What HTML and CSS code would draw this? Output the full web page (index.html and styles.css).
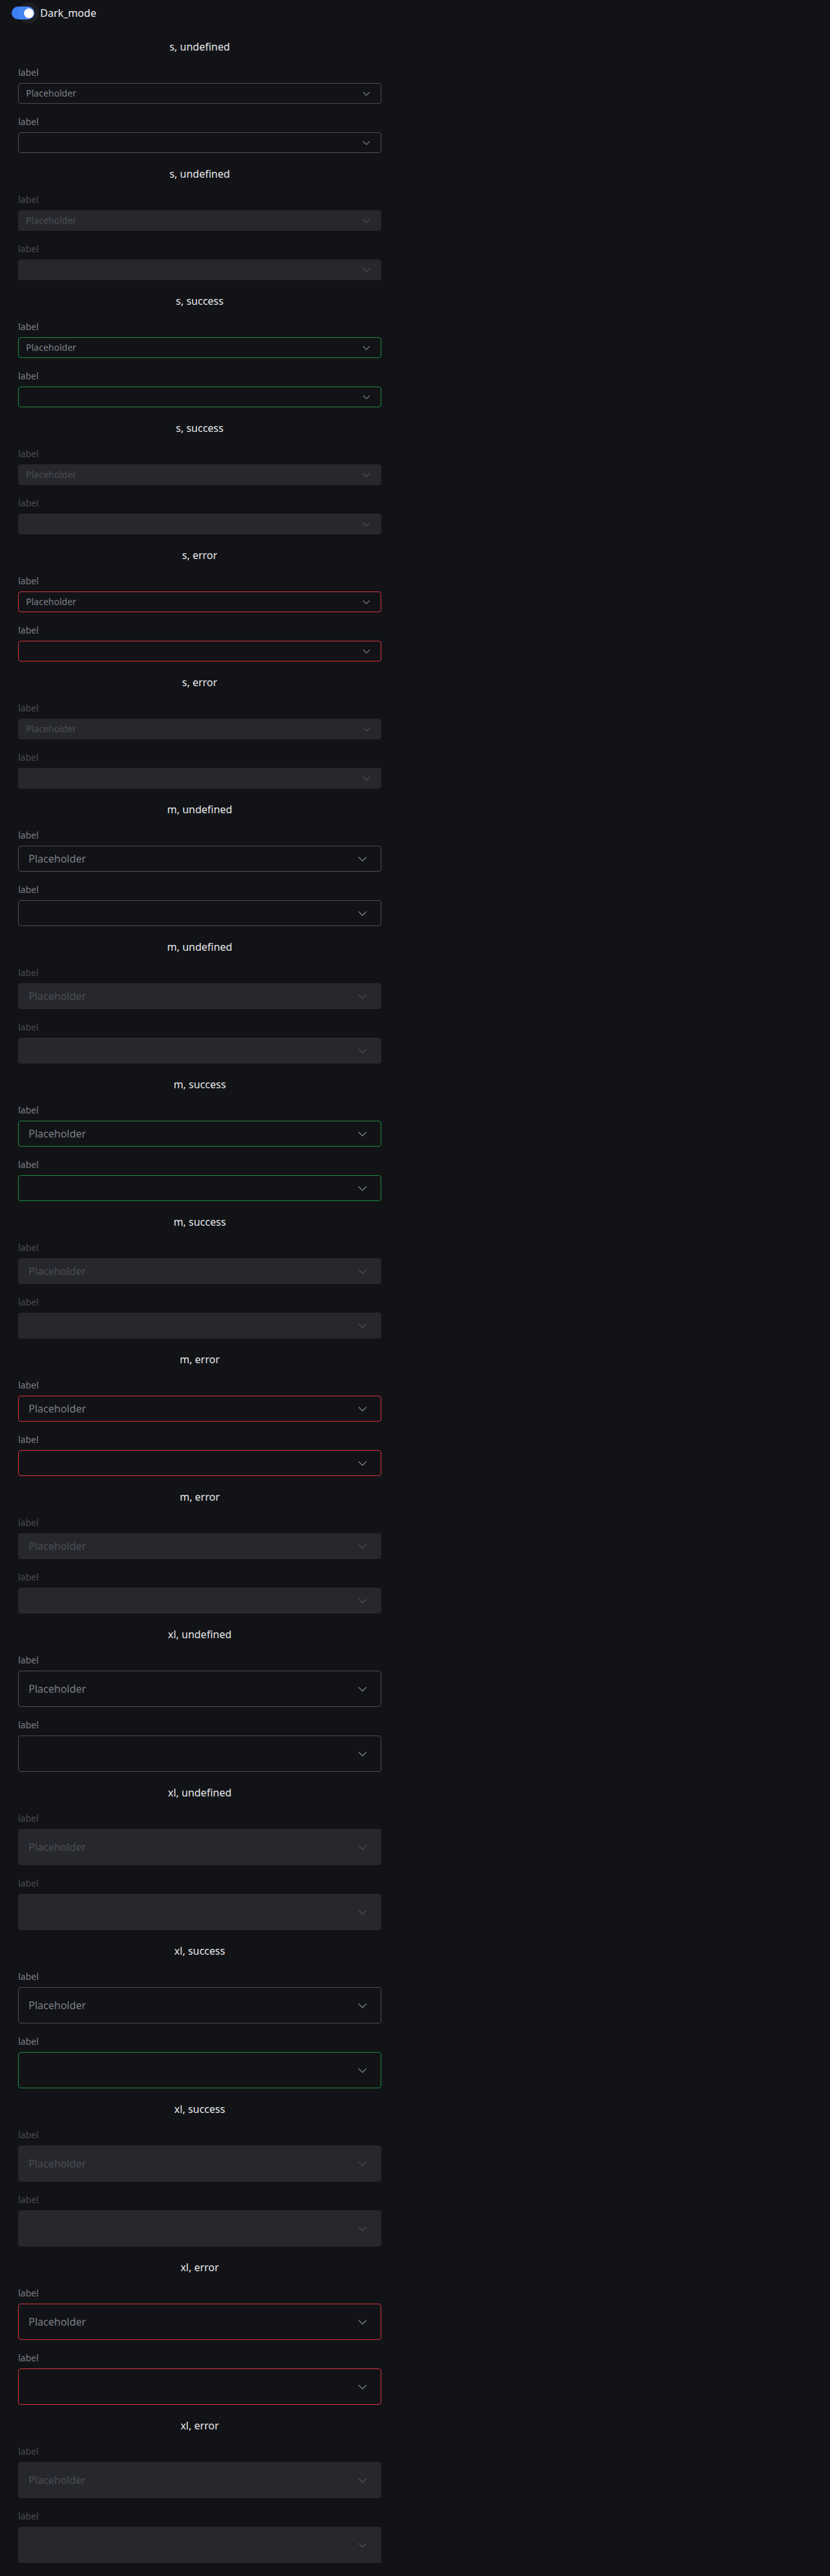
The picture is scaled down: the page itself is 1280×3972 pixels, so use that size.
FILE: index.html
```html
<!DOCTYPE html>
<html lang="en">
<head>
<meta charset="utf-8">
<title>Select showcase</title>
<link rel="stylesheet" href="styles.css">
</head>
<body>
<header class="topbar">
  <label class="switch">
    <span class="switch-track"><span class="switch-halo"><span class="switch-knob"></span></span></span>
    <span class="switch-text">Dark_mode</span>
  </label>
</header>
<main class="stack" id="stack"></main>
<template id="chev-s"><svg class="chev chev-s" width="12" height="12" viewBox="0 0 12 12"><path d="M1 4 L6 9 L11 4" fill="none" stroke="currentColor" stroke-width="1.2"/></svg></template>
<template id="chev-m"><svg class="chev chev-m" width="16" height="16" viewBox="0 0 16 16"><path d="M2 5.5 L8 11.5 L14 5.5" fill="none" stroke="currentColor" stroke-width="1.3"/></svg></template>
<script src="app.js"></script>
</body>
</html>
```
FILE: app.js
```js
(function () {
  var stack = document.getElementById('stack');
  var sizes = ['s', 'm', 'xl'];
  var statuses = ['undefined', 'success', 'error'];
  function field(size, status, disabled, placeholder, idx) {
    var f = document.createElement('div');
    f.className = 'field' + (disabled ? ' is-disabled' : '');
    var l = document.createElement('div');
    l.className = 'field-label';
    l.textContent = 'label';
    f.appendChild(l);
    var s = document.createElement('div');
    var cls = 'select select--' + size;
    if (disabled) cls += ' is-disabled';
    else if (status === 'success' && !(size === 'xl' && idx === 0)) cls += ' is-success';
    else if (status === 'error') cls += ' is-error';
    s.className = cls;
    var v = document.createElement('span');
    v.className = 'select-value';
    v.textContent = placeholder ? 'Placeholder' : '';
    s.appendChild(v);
    var tpl = document.getElementById(size === 's' ? 'chev-s' : 'chev-m');
    s.appendChild(tpl.content.cloneNode(true));
    f.appendChild(s);
    return f;
  }
  sizes.forEach(function (size) {
    statuses.forEach(function (status) {
      [false, true].forEach(function (disabled) {
        var h = document.createElement('h2');
        h.className = 'section-title';
        h.textContent = size + ', ' + status;
        stack.appendChild(h);
        stack.appendChild(field(size, status, disabled, true, 0));
        stack.appendChild(field(size, status, disabled, false, 1));
      });
    });
  });
})();
```
FILE: styles.css
```css
* { box-sizing: border-box; }
html, body { margin: 0; padding: 0; }
body {
  background: #121317;
  font-family: "Noto Sans", "Open Sans", sans-serif;
  color: #e6e7e9;
  min-height: 3972px;
}
.topbar {
  height: 40px;
  display: flex;
  align-items: center;
  padding-left: 18px;
}
.switch {
  display: flex;
  align-items: center;
  gap: 9px;
}
.switch-track {
  position: relative;
  width: 35px;
  height: 20px;
  border-radius: 10px;
  background: #3b7ff2;
  display: block;
}
.switch-halo {
  position: absolute;
  left: 10px;
  top: -6px;
  width: 32px;
  height: 32px;
  border-radius: 50%;
  background: rgba(255, 255, 255, 0.05);
  display: flex;
  align-items: center;
  justify-content: center;
}
.switch-knob {
  width: 15px;
  height: 15px;
  border-radius: 50%;
  background: #ffffff;
  display: block;
}
.switch-text {
  font-size: 16px;
  line-height: 24px;
  color: #eceef0;
  margin-left: 0;
}
.stack {
  width: 616px;
  padding: 20px 28px;
  display: flex;
  flex-direction: column;
  gap: 20px;
}
.section-title {
  margin: 0;
  font-size: 16px;
  font-weight: 400;
  line-height: 24px;
  text-align: center;
  color: #e8e9eb;
}
.field {
  display: flex;
  flex-direction: column;
  gap: 8px;
}
.field-label {
  font-size: 14px;
  line-height: 16px;
  color: #7c7f87;
}
.field.is-disabled .field-label { color: #4a4c53; }
.select {
  display: flex;
  align-items: center;
  justify-content: space-between;
  border: 1px solid #4b4d54;
  border-radius: 4px;
  background: #121317;
  color: #7c7f87;
}
.select--s { height: 32px; padding: 0 16px 0 11px; font-size: 14px; }
.select--m { height: 40px; padding: 0 20px 0 15px; font-size: 16px; }
.select--xl { height: 56px; padding: 0 20px 0 15px; font-size: 16px; }
.select-value { line-height: 20px; }
.chev { display: block; flex: none; color: #7c7f87; }
.select.is-success { border-color: #1c8e3b; }
.select.is-error { border-color: #d8343a; }
.select.is-disabled {
  background: #27282d;
  border-color: #27282d;
  color: #4b4d54;
}
.select.is-disabled .chev { color: #4b4d54; }
```
